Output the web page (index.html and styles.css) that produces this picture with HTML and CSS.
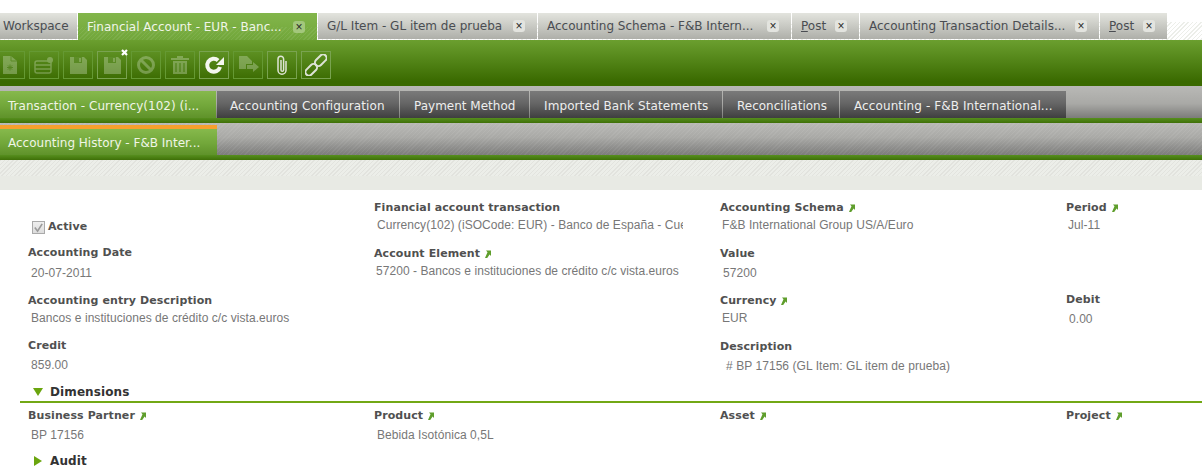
FILE: index.html
```html
<!DOCTYPE html>
<html lang="en">
<head>
<meta charset="utf-8">
<title>Financial Account</title>
<link rel="stylesheet" href="styles.css">
</head>
<body>
<svg class="defs" width="0" height="0" aria-hidden="true">
  <symbol id="jump" viewBox="0 0 7 8"><path d="M2 .5h5v5.500L5.600 4.600 3.200 8H1L3.500 2.200z" fill="#5f9e2c"/></symbol>
</svg>
<nav class="tabs">
  <div class="tab tab-workspace"><span class="tab-title">Workspace</span></div>
  <div class="tab tab-active tab-w239"><span class="tab-title">Financial Account - EUR - Banc...</span><span class="close">×</span></div>
  <div class="tab tab-w219"><span class="tab-title">G/L Item - GL item de prueba</span><span class="close">×</span></div>
  <div class="tab tab-w253"><span class="tab-title">Accounting Schema - F&amp;B Intern...</span><span class="close">×</span></div>
  <div class="tab tab-w67"><span class="tab-title"><u>P</u>ost</span><span class="close">×</span></div>
  <div class="tab tab-w239"><span class="tab-title">Accounting Transaction Details...</span><span class="close">×</span></div>
  <div class="tab tab-w67"><span class="tab-title"><u>P</u>ost</span><span class="close">×</span></div>
</nav>
<div class="toolbar">
  <button class="tool tool-first off"><svg viewBox="0 0 22 22"><path d="M4 2h8l6 5v13H4z" fill="#d5e4c8"/><path d="M12 2v5h6" fill="none" stroke="#6f9a45"/><path d="M8 13.500h6M11 10.500v6M8.900 11.400l4.200 4.200M13.100 11.400l-4.200 4.200" stroke="#6f9a45"/></svg></button>
  <button class="tool off"><svg viewBox="0 0 22 22"><rect x="2" y="7" width="16" height="12" rx="2" fill="none" stroke="#d5e4c8" stroke-width="1.500"/><path d="M2 11h16M2 15h16" stroke="#d5e4c8" stroke-width="1.500"/><circle cx="17" cy="6" r="3" fill="#d5e4c8"/></svg></button>
  <button class="tool off"><svg viewBox="0 0 22 22"><path d="M3 3h14l3 3v14H3z" fill="#d5e4c8"/><path d="M7 3h8v6H7z" fill="#6d9a42"/><path d="M12 4h2v4h-2z" fill="#d5e4c8"/></svg></button>
  <button class="tool off save-close"><svg viewBox="0 0 22 22"><path d="M3 3h14l3 3v14H3z" fill="#d5e4c8"/><path d="M7 3h8v6H7z" fill="#6d9a42"/><path d="M12 4h2v4h-2z" fill="#d5e4c8"/></svg><svg class="mini-x" viewBox="0 0 7 7"><path d="M1 1l5 5M6 1L1 6" stroke="#fff" stroke-width="2.200"/></svg></button>
  <button class="tool off"><svg viewBox="0 0 22 22"><circle cx="11" cy="11" r="7.500" fill="none" stroke="#d5e4c8" stroke-width="3"/><path d="M6 6l10 10" stroke="#d5e4c8" stroke-width="3"/></svg></button>
  <button class="tool off"><svg viewBox="0 0 22 22"><path d="M2 4h18v2H2zM8 2h6v2H8zM4 7h14v13H4z" fill="#d5e4c8"/><path d="M7 9v9M11 9v9M15 9v9" stroke="#6d9a42" stroke-width="1.500"/></svg></button>
  <button class="tool"><svg viewBox="0 0 22 22"><path d="M17 13a6.500 6.500 0 1 1-1.900-6.600" fill="none" stroke="#f4f6ef" stroke-width="4"/><path d="M21 3v8h-8z" fill="#f4f6ef"/></svg></button>
  <button class="tool off"><svg viewBox="0 0 22 22"><path d="M2 2h8l5 5v3H9v5H2z" fill="#d5e4c8"/><path d="M10 11h6V8l6 5-6 5v-3h-6z" fill="#d5e4c8"/></svg></button>
  <button class="tool"><svg viewBox="0 0 22 22"><path d="M10 6v10a1.300 1.300 0 0 0 2.600 0V5a2.800 2.800 0 0 0-5.600 0v11.200a4 4 0 0 0 8 0V7" fill="none" stroke="#dfe5d6" stroke-width="1.500"/></svg></button>
  <button class="tool"><svg viewBox="0 0 22 22"><g fill="none" stroke="#dde3d6" stroke-width="2" transform="rotate(-45 11 11)"><rect x="-2.500" y="7.500" width="13.500" height="7" rx="3.500"/><rect x="11" y="7.500" width="13.500" height="7" rx="3.500"/></g></svg></button>
</div>
<div class="subtabs subtabs-main">
  <div class="sub sub-active sub-216">Transaction - Currency(102) (i...</div>
  <div class="sub sub-183 wide">Accounting Configuration</div>
  <div class="sub sub-130">Payment Method</div>
  <div class="sub sub-193 wide">Imported Bank Statements</div>
  <div class="sub sub-117">Reconciliations</div>
  <div class="sub sub-226 wide">Accounting - F&amp;B International...</div>
</div>
<div class="green-strip"></div>
<div class="subtabs subtabs-second">
  <div class="sub sub-active sub-217 sub-current">Accounting History - F&amp;B Inter...</div>
</div>
<div class="green-strip"></div>
<div class="status-strip"></div>
<main class="form">
  <div class="grid">
    <div class="field active-field"><span class="checkbox"><svg viewBox="0 0 12 12"><path d="M2 6l3 4 5-8" fill="none" stroke="#9a9a9a" stroke-width="1.800"/></svg></span><span class="label">Active</span></div>
    <div class="field"><div class="label">Financial account transaction</div><div class="value v3 clip">Currency(102) (iSOCode: EUR) - Banco de España - Cuenta</div></div>
    <div class="field"><div class="label">Accounting Schema <svg class="jump"><use href="#jump"/></svg></div><div class="value v2">F&amp;B International Group US/A/Euro</div></div>
    <div class="field"><div class="label">Period <svg class="jump"><use href="#jump"/></svg></div><div class="value v2">Jul-11</div></div>

    <div class="field up"><div class="label">Accounting Date</div><div class="value v3 looser">20-07-2011</div></div>
    <div class="field"><div class="label">Account Element <svg class="jump"><use href="#jump"/></svg></div><div class="value v2">57200 - Bancos e instituciones de crédito c/c vista.euros</div></div>
    <div class="field"><div class="label">Value</div><div class="value v3 loose">57200</div></div>
    <div class="field"></div>

    <div class="field"><div class="label">Accounting entry Description</div><div class="value v3">Bancos e instituciones de crédito c/c vista.euros</div></div>
    <div class="field"></div>
    <div class="field"><div class="label">Currency <svg class="jump"><use href="#jump"/></svg></div><div class="value v2">EUR</div></div>
    <div class="field up"><div class="label">Debit</div><div class="value v3 loose">0.00</div></div>

    <div class="field up"><div class="label">Credit</div><div class="value v3 loose">859.00</div></div>
    <div class="field"></div>
    <div class="field"><div class="label">Description</div><div class="value v6 loose"># BP 17156 (GL Item: GL item de prueba)</div></div>
    <div class="field"></div>
  </div>
  <div class="section"><svg class="arrow" viewBox="0 0 10 8"><path d="M0 0h10L5 8z" fill="#6aa50e"/></svg><span>Dimensions</span></div>
  <div class="grid grid-dimensions">
    <div class="field"><div class="label">Business Partner <svg class="jump"><use href="#jump"/></svg></div><div class="value v3 loose">BP 17156</div></div>
    <div class="field"><div class="label">Product <svg class="jump"><use href="#jump"/></svg></div><div class="value v3 loose">Bebida Isotónica 0,5L</div></div>
    <div class="field"><div class="label">Asset <svg class="jump"><use href="#jump"/></svg></div></div>
    <div class="field"><div class="label">Project <svg class="jump"><use href="#jump"/></svg></div></div>
  </div>
  <div class="section section-closed"><svg class="arrow arrow-right" viewBox="0 0 8 10"><path d="M0 0l8 5-8 5z" fill="#6aa50e"/></svg><span>Audit</span></div>
</main>
</body>
</html>
```
FILE: styles.css
```css
* { box-sizing: border-box; }
html, body { margin: 0; padding: 0; }
body { width: 1202px; height: 467px; overflow: hidden; background: #fff; font-family: "DejaVu Sans", sans-serif; }
.defs { display: block; height: 0; }

.tabs {
  display: flex; height: 27px; margin-top: 13px;
  background: repeating-linear-gradient(135deg, #eceee9 0 1px, #fff 1px 3px) 0 9px / 100% 18px no-repeat;
}
.tab {
  display: flex; align-items: center; height: 26px; padding-left: 9px;
  margin-right: 1px; flex: none;
  background: linear-gradient(#e3e4de, #aeafa9);
  font-size: 12px; color: #4a4d52; white-space: nowrap;
}
.tab-title { flex: 1; }
.tab-workspace { width: 77px; padding-left: 3px; }
.tab-active {
  height: 27px; color: #f1f5e8;
  background:
    repeating-linear-gradient(135deg, rgba(255,255,255,.07) 0 1px, transparent 1px 3px) 0 14px / 100% 13px no-repeat,
    linear-gradient(#83b64b, #71a63a);
}
.tab-w239 { width: 239px; }
.tab-w219 { width: 219px; }
.tab-w253 { width: 253px; }
.tab-w67 { width: 67px; }
.close {
  display: flex; align-items: center; justify-content: center;
  width: 12px; height: 12px; margin-right: 12px; border-radius: 3px;
  background: #e3e4df; color: #2a2a2a; font-family: "Liberation Sans", sans-serif; font-size: 12px; line-height: 1;
}
.tab-active .close { background: #a3c77c; }

.toolbar {
  display: flex; gap: 4px; align-items: center; height: 46px; overflow: hidden;
  background: linear-gradient(#6b9f2f, #3a6a00 90%);
}
.tool {
  position: relative; flex: none; display: flex; align-items: center; justify-content: center;
  width: 30px; height: 28px; margin-top: 3px; padding: 0;
  background: transparent; border: 1px solid #79a350;
}
.tool svg { width: 22px; height: 22px; }
.tool.off { border-color: #659933; }
.tool.off svg { opacity: .34; }
.tool-first { margin-left: -5px; }
.tool.off.save-close { border-color: #79a350; }
.save-close .mini-x { position: absolute; top: -3px; right: -2px; width: 7px; height: 7px; }
.tool.off.save-close .mini-x { opacity: 1; }

.subtabs { display: flex; background: linear-gradient(#b9b9b6, #a9a9a6 55%, #7c7c7a); }
.subtabs-main { height: 32px; padding-top: 5px; }
.subtabs-second {
  height: 32px; padding-top: 2px;
  background:
    repeating-linear-gradient(135deg, rgba(255,255,255,.06) 0 1px, transparent 1px 3px),
    linear-gradient(#b9b9b6, #a9a9a6 45%, #7c7c7a);
}
.sub {
  display: flex; align-items: center; padding: 2px 0 0 14px; margin-right: 1px; flex: none;
  height: 27px; font-size: 12px; color: #eee; white-space: nowrap;
  background: linear-gradient(#7a7a7a, #666 45%, #3f3f3f);
}
.wide { letter-spacing: .1px; }
.sub-active { padding-left: 8px; color: #f0f5e6; background: linear-gradient(#86b94c, #72a73a 55%, #5f922a); }
.sub-current { height: 30px; margin-right: 0; padding-top: 2px; border-top: 4px solid #f7a02d; }
.sub-216 { width: 216px; letter-spacing: .03px; }
.sub-217 { width: 217px; }
.sub-183 { width: 182px; padding-left: 13px; }
.sub-130 { width: 129px; }
.sub-193 { width: 192px; }
.sub-117 { width: 116px; }
.sub-226 { width: 226px; }
.green-strip { height: 5px; background: linear-gradient(#568f1e, #3f7008); }
.status-strip { height: 30px; background: repeating-linear-gradient(135deg, #e2e3de 0 1px, #eceee9 1px 3px) 0 0 / 100% 16px no-repeat, #e8eae4; }

.form { padding: 11px 0 0 20px; }
.grid { display: grid; grid-template-columns: repeat(4, 346px); grid-template-rows: 46px 47px 46px 45px; padding-left: 8px; }
.grid-dimensions { grid-template-rows: 42px; }
.field { font-size: 12px; }
.up { margin-top: -1px; }
.label { font-size: 11px; font-weight: bold; color: #505050; line-height: 14px; white-space: nowrap; letter-spacing: .1px; }
.value { font-family: "Liberation Sans", sans-serif; font-size: 12px; color: #777; line-height: 14px; margin-top: 3px; white-space: nowrap; letter-spacing: .06px; }
.value.loose { margin-top: 5px; }
.value.looser { margin-top: 6px; }
.v2 { padding-left: 2px; }
.v3 { padding-left: 3px; }
.v6 { padding-left: 6px; }
.clip { width: 309px; overflow: hidden; }
.jump { width: 7px; height: 8px; margin-left: 0; vertical-align: -1px; }
.active-field { display: flex; align-items: center; height: 14px; margin-top: 19px; padding-left: 4px; gap: 3px; }
.checkbox { display: block; width: 13px; height: 13px; border: 1px solid #aaa; background: linear-gradient(#eee, #ddd); }
.checkbox svg { display: block; width: 11px; height: 11px; }
.section {
  display: flex; align-items: center; gap: 7px; height: 18px; padding: 0 0 2px 13px;
  border-bottom: 2px solid #72a815; font-size: 12px; font-weight: bold; color: #333;
  letter-spacing: .1px; margin-bottom: 6px;
}
.section-closed { height: 19px; padding: 0 0 0 14px; border-bottom: 0; margin: 0; gap: 8px; }
.arrow { width: 10px; height: 8px; }
.arrow-right { width: 8px; height: 10px; }
```
